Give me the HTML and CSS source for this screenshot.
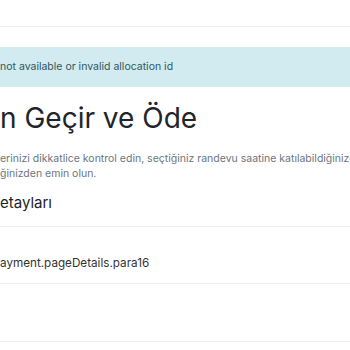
FILE: index.html
```html
<!DOCTYPE html>
<html lang="tr">
<head>
<meta charset="utf-8">
<link rel="stylesheet" href="styles.css">
</head>
<body>
<div class="page">
  <header class="topbar"></header>
  <div class="alert">not available or invalid allocation id</div>
  <h1 class="title">n Geçir ve Öde</h1>
  <p class="lead">
    <span class="line">erinizi dikkatlice kontrol edin, seçtiğiniz randevu saatine katılabildiğinizden</span>
    <span class="line">ğinizden emin olun.</span>
  </p>
  <h2 class="subtitle">etayları</h2>
  <div class="table">
    <div class="row">ayment.pageDetails.para16</div>
    <div class="row row-empty"></div>
  </div>
</div>
</body>
</html>
```
FILE: styles.css
```css
html, body {
  margin: 0;
  padding: 0;
  background: #fff;
  overflow: hidden;
}
body {
  font-family: Inter, "Noto Sans", sans-serif;
  color: #212529;
}
.page {
  width: 350px;
  overflow: hidden;
}
.topbar {
  height: 26px;
  border-bottom: 1px solid #ebedef;
}
.alert {
  margin-top: 20px;
  height: 40px;
  box-sizing: border-box;
  padding: 12px 0 0;
  background: #d1ebf0;
  color: #32565f;
  font-size: 10.5px;
  line-height: 15px;
  white-space: nowrap;
}
.title {
  margin: 14px 0 0;
  font-size: 28px;
  line-height: 34px;
  font-weight: 400;
  white-space: nowrap;
}
.lead {
  margin: 15.5px 0 0;
  font-size: 10.5px;
  line-height: 15px;
  color: #6c757d;
}
.line {
  display: block;
  white-space: nowrap;
}
.subtitle {
  margin: 13px 0 0;
  font-size: 15px;
  line-height: 18px;
  font-weight: 400;
  white-space: nowrap;
}
.table {
  margin-top: 14px;
  border-top: 1px solid #ebedef;
}
.row {
  height: 57px;
  box-sizing: border-box;
  padding-top: 29.5px;
  font-size: 11.7px;
  line-height: 15px;
  color: #333;
  border-bottom: 1px solid #ebedef;
  white-space: nowrap;
}
.row-empty {
  height: 58px;
}
```
